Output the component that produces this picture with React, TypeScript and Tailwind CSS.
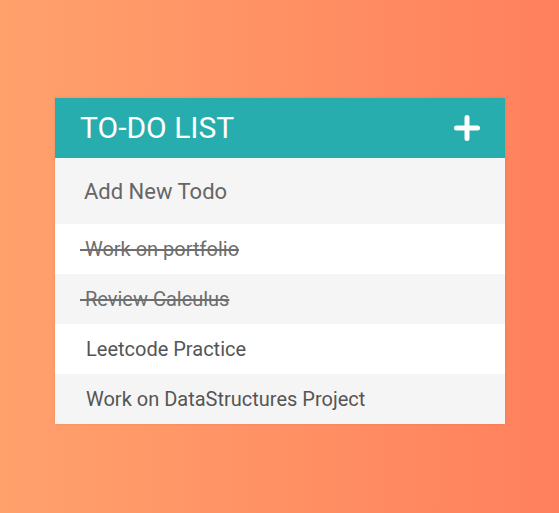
import React from 'react';

const todos = [
  { id: 1, text: 'Work on portfolio', done: true },
  { id: 2, text: 'Review Calculus', done: true },
  { id: 3, text: 'Leetcode Practice', done: false },
  { id: 4, text: 'Work on DataStructures Project', done: false },
];

export default function App() {
  return (
    <div
      className="w-[559px] h-[513px] bg-gradient-to-r from-[#ffa16c] to-[#ff805d] pt-[98px] pl-[55px]"
      style={{ fontFamily: 'Roboto, "Liberation Sans", sans-serif' }}
    >
      <div className="w-[450px] bg-white shadow-[0_0_3px_rgba(0,0,0,0.1)]">
        {/* Header */}
        <div className="h-[60px] bg-[#27adad] flex items-center justify-between pl-[25px] pr-[25px]">
          <h1 className="text-white text-[30px] leading-none font-normal">TO-DO LIST</h1>
          <svg width="26" height="26" viewBox="0 0 26 26">
            <path d="M13 2.5v21M2.5 13h21" stroke="white" strokeWidth="5" strokeLinecap="round" />
          </svg>
        </div>

        {/* Input */}
        <div className="h-[66px] bg-[#f5f5f5] flex items-center pl-[29px]">
          <span className="text-[22px] text-[#666]">Add New Todo</span>
        </div>

        {/* List */}
        <ul>
          {todos.map((todo, i) => (
            <li
              key={todo.id}
              className={`h-[50px] flex items-center pl-[25px] text-[20px] ${
                i % 2 === 0 ? 'bg-white' : 'bg-[#f5f5f5]'
              }`}
            >
              {todo.done ? (
                <span className="line-through decoration-[1.5px] text-[#6e6e6e] whitespace-pre">
                  {' ' + todo.text}
                </span>
              ) : (
                <span className="text-[#555] pl-[6px]">{todo.text}</span>
              )}
            </li>
          ))}
        </ul>
      </div>
    </div>
  );
}
